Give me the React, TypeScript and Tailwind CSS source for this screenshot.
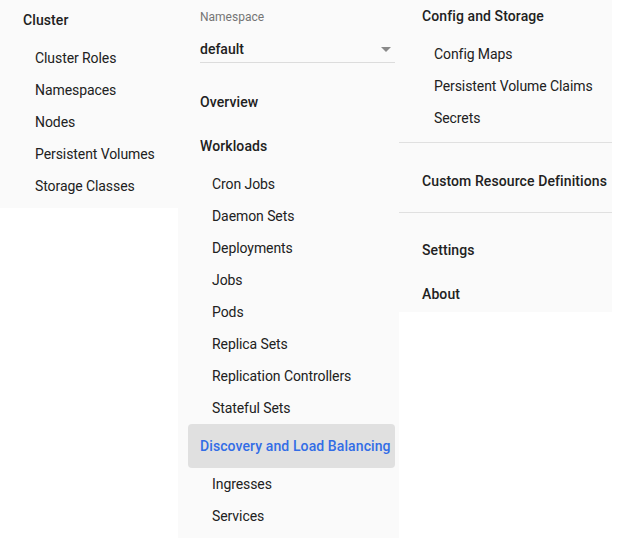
const font = { fontFamily: "Roboto, 'Liberation Sans', sans-serif" };

function Header({ label, className = "h-11" }: { label: string; className?: string }) {
	return (
		<div className={`flex items-center text-[14px] font-medium tracking-[0.1px] text-[#212121] ${className}`}>
			{label}
		</div>
	);
}

function Item({ label }: { label: string }) {
	return (
		<div className="flex h-8 items-center text-[14px] tracking-[-0.08px] text-[#212121]">{label}</div>
	);
}

export default function App() {
	return (
		<div className="flex min-h-[538px] w-[627px] items-start bg-white" style={font}>
			{/* cluster */}
			<div className="h-[208px] w-[178px] bg-[#fafafa] pl-[23px]">
				<Header label="Cluster" className="h-10" />
				<div className="mt-[2px] pl-3">
					{["Cluster Roles", "Namespaces", "Nodes", "Persistent Volumes", "Storage Classes"].map((l) => (
						<Item key={l} label={l} />
					))}
				</div>
			</div>

			{/* namespace + workloads */}
			<div className="h-[538px] w-[221px] overflow-hidden bg-[#fafafa]">
				<div className="pl-[22px] pt-[9px]">
					<div className="text-[12px] leading-4 text-[#757575]">Namespace</div>
					<div className="mt-[10px] flex h-[28px] w-[195px] items-center justify-between border-b border-[#dcdcdc] pt-[2px]">
						<span className="text-[14px] font-medium text-[#212121]">default</span>
						<svg width="10" height="5" viewBox="0 0 10 5" className="mr-[4px]">
							<path d="M0 0h10L5 5z" fill="#8a8a8a" />
						</svg>
					</div>
					<div className="mt-[17px]">
						<Header label="Overview" />
						<Header label="Workloads" />
					</div>
					<div className="pl-3">
						{[
							"Cron Jobs",
							"Daemon Sets",
							"Deployments",
							"Jobs",
							"Pods",
							"Replica Sets",
							"Replication Controllers",
							"Stateful Sets",
						].map((l) => (
							<Item key={l} label={l} />
						))}
					</div>
				</div>
				<div className="ml-[10px] flex h-11 w-[207px] items-center rounded-[4px] bg-[#e0e0e0] pl-3 text-[14px] font-medium tracking-[0.1px] text-[#326de6]">
					Discovery and Load Balancing
				</div>
				<div className="pl-[34px]">
					<Item label="Ingresses" />
					<Item label="Services" />
				</div>
			</div>

			{/* config + misc */}
			<div className="h-[312px] w-[213px] overflow-hidden bg-[#fafafa]">
				<div className="pl-[23px]">
					<Header label="Config and Storage" className="h-8" />
					<div className="mt-[6px] pl-3">
						<Item label="Config Maps" />
						<Item label="Persistent Volume Claims" />
						<Item label="Secrets" />
					</div>
				</div>
				<div className="mt-2 border-b border-[#e0e0e0]" />
				<div className="pb-[21px] pl-[23px] pt-[28px] text-[14px] font-medium leading-5 tracking-[0.1px] text-[#212121]">
					Custom Resource Definitions
				</div>
				<div className="border-b border-[#e0e0e0]" />
				<div className="mt-[15px] pl-[23px]">
					<Header label="Settings" />
					<Header label="About" />
				</div>
			</div>
		</div>
	);
}
